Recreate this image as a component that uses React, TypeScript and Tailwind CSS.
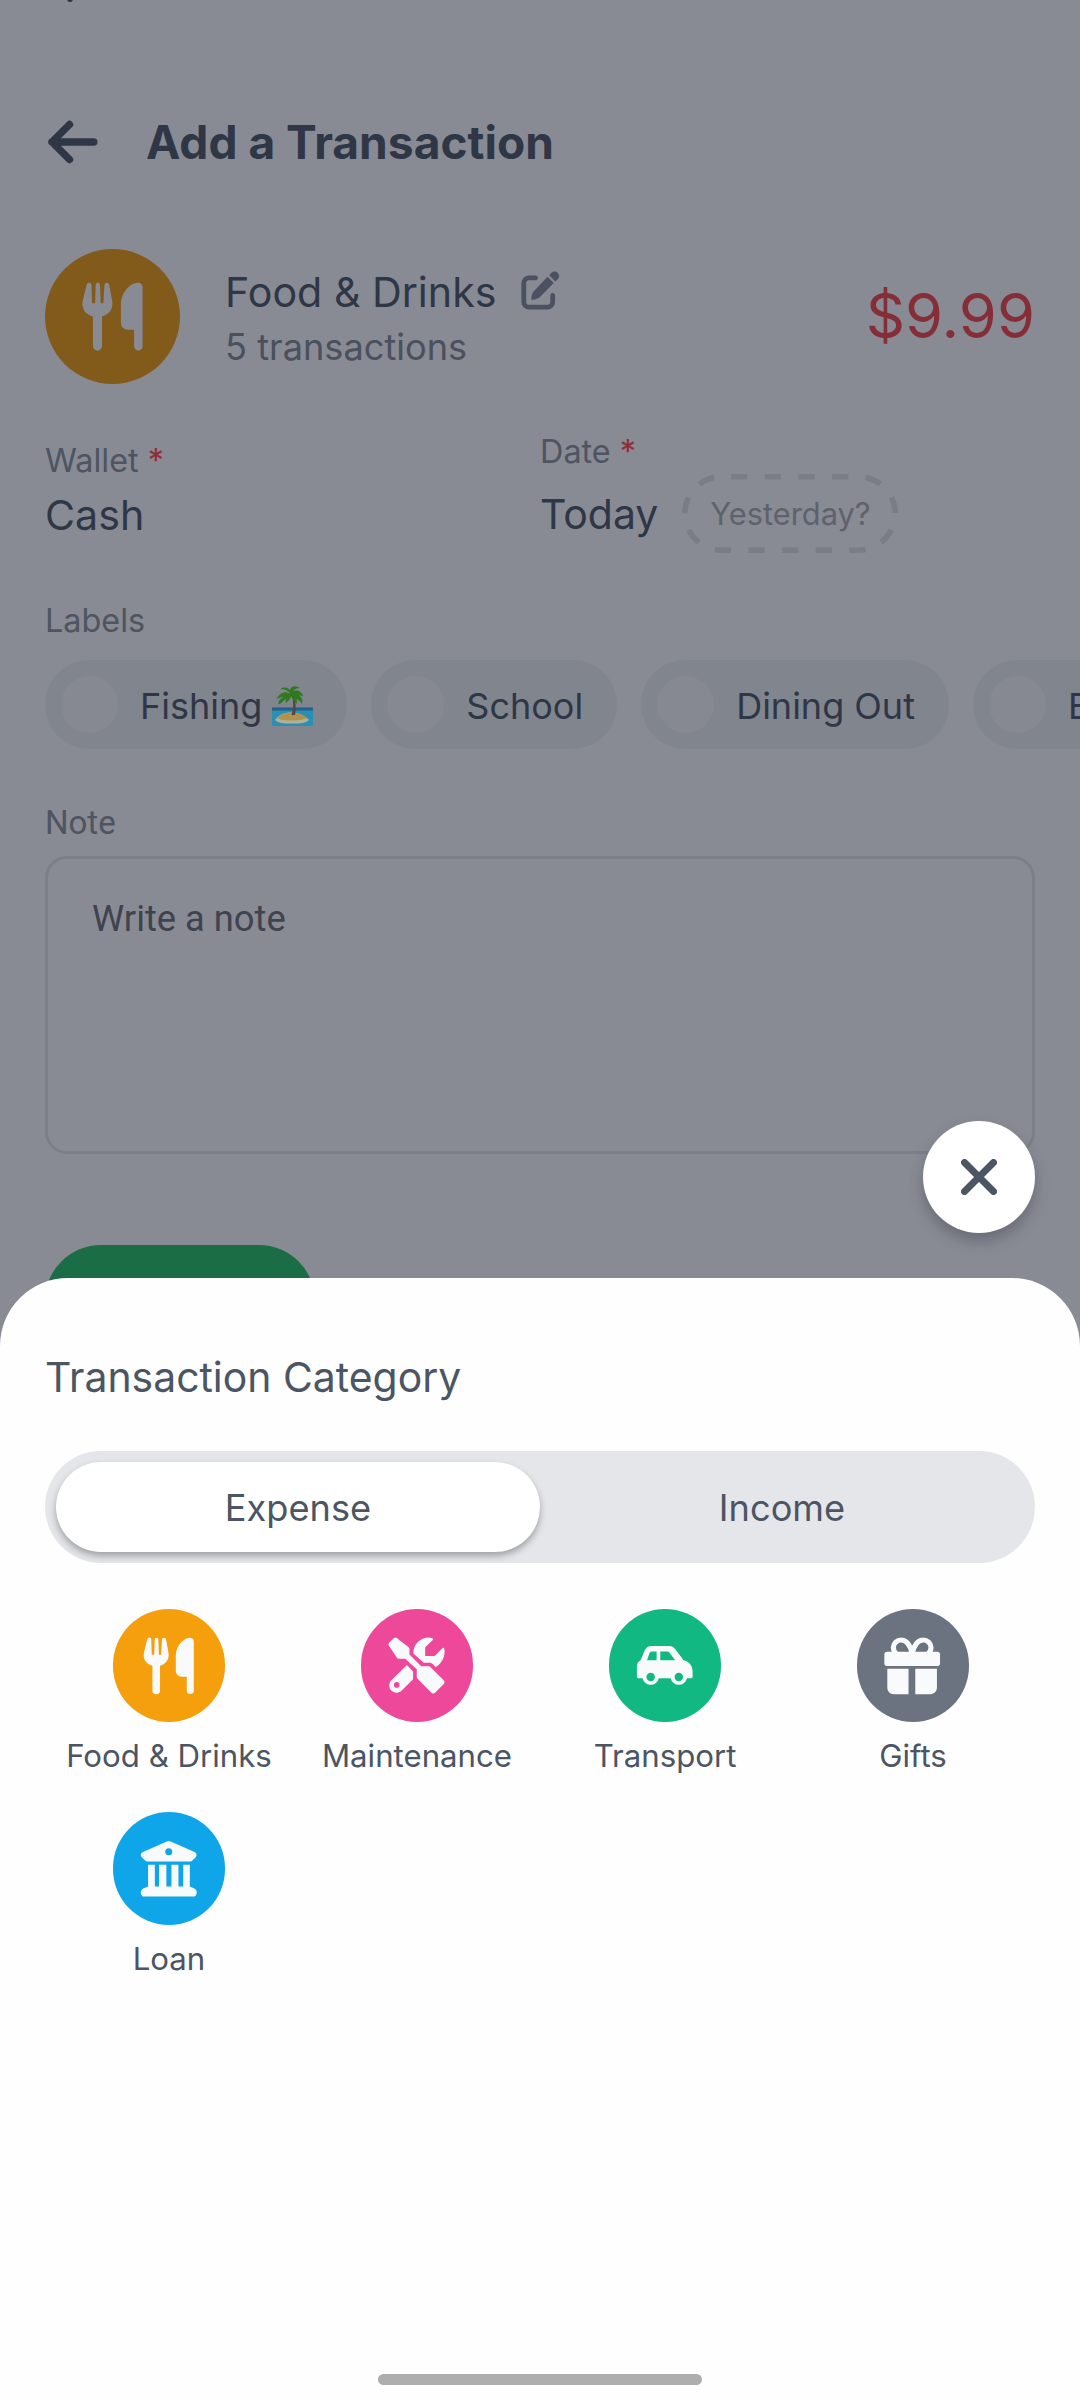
import React, { useState } from "react";

type IconProps = { className?: string };

function FoodIcon({ className }: IconProps) {
  return (
    <svg viewBox="0 0 24 24" className={className} fill="currentColor">
      <path d="M4.35 2.6a.72.72 0 0 1 1.43.08L5.95 8.1h.9L7 2.65a.65.65 0 0 1 1.3 0l.2 5.45h.8l.3-5.42a.72.72 0 0 1 1.42-.1l.85 4.6c.5 2.7-.9 4.1-2.97 4.8v8.8a1.35 1.35 0 0 1-2.7 0v-8.8c-2.2-.7-3.5-2.1-3-4.8z" />
      <path d="M19.5 2c.9 0 1.4.5 1.4 1.3v17.5a1.25 1.25 0 0 1-2.5 0V15.9h-1.9a2 2 0 0 1-2-2V8.5c0-3.4 2.4-6.3 5-6.5z" />
    </svg>
  );
}

function ToolsIcon({ className }: IconProps) {
  return (
    <svg viewBox="0 0 24 24" className={className} fill="currentColor">
      <path d="M2.1 4.9a.9.9 0 0 1 0-1L3.8 2.2a.9.9 0 0 1 1.1-.1l4.1 3.2c.3.2.4.4.4.7v2l4.2 4.2h2.5c.4 0 .6.1.9.4l4.5 4.5c.5.5.5 1 0 1.5l-2.9 2.9c-.5.5-1 .5-1.5 0l-4.8-4.9c-.2-.2-.3-.5-.3-.8v-2.6L7.9 9.5H5.6c-.3 0-.5-.1-.7-.4z" />
      <path
        d="M17.6 2.2c.3.1.3.4.1.6L15 5.4v3.1h3.4l2.7-2.7c.3-.3.6-.2.7.1.5 2.6-.8 5.4-3.1 6.5l-1-1c-.4-.4-.8-.5-1.3-.5h-1.9L10.8 7.6c-.1-3.7 3.5-6.4 6.8-5.4zM8.5 11.7l2.2 2.3v2.8l-4.3 4.3a2.65 2.65 0 0 1-3.7-3.7zm-3.6 6.1a1 1 0 1 0 0 2 1 1 0 0 0 0-2z"
        fillRule="evenodd"
      />
    </svg>
  );
}

function CarIcon({ className }: IconProps) {
  return (
    <svg viewBox="0 0 24 24" className={className} fill="currentColor">
      <path
        fillRule="evenodd"
        d="M4.9 6.5A2.7 2.7 0 0 1 7.4 4.95h6.2c.9 0 1.6.4 2.1 1.1l3 4a3.8 3.8 0 0 1 3.2 3.8v2.1c0 .3-.2.5-.5.5h-1.5a2.97 2.97 0 0 1-5.8 0H9.9a2.97 2.97 0 0 1-5.8 0H2.7c-.4 0-.6-.2-.6-.6v-3.6c0-1.1.4-1.7 1.3-2.2zM7 14.5a1.5 1.5 0 1 0 0 3 1.5 1.5 0 0 0 0-3zm10 0a1.5 1.5 0 1 0 0 3 1.5 1.5 0 0 0 0-3zM6.6 7.5l-.9 2.55h3.4V6.95H7.4a.8.8 0 0 0-.8.55zm3.8-.55v3.1h5.3l-2-2.7a.9.9 0 0 0-.7-.4z"
      />
    </svg>
  );
}

function GiftIcon({ className }: IconProps) {
  return (
    <svg viewBox="0 0 24 24" className={className} fill="currentColor">
      <path
        fill="none"
        stroke="currentColor"
        strokeWidth="1.8"
        d="M11.8 7.6C11 4.4 9.8 2.85 7.9 2.85a2.7 2.7 0 0 0-2.8 2.6c0 1.1.4 1.8 1.1 2.2M11.8 7.6C12.6 4.4 13.8 2.85 15.7 2.85a2.7 2.7 0 0 1 2.8 2.6c0 1.1-.4 1.8-1.1 2.2"
      />
      <rect x="1.9" y="7" width="19.8" height="5.1" rx="1" />
      <path d="M2.95 13.1h7.55v9H5.2a2.2 2.2 0 0 1-2.25-2.2zM12.9 13.1h7.7v6.8a2.2 2.2 0 0 1-2.2 2.2h-5.5z" />
    </svg>
  );
}

function BankIcon({ className }: IconProps) {
  return (
    <svg viewBox="0 0 24 24" className={className} fill="currentColor">
      <path
        fillRule="evenodd"
        d="M11.3 2.3a1.7 1.7 0 0 1 1.4 0l8.5 3.7c.8.4.9 1.2.3 2l-1.1 1.1a1.2 1.2 0 0 1-.8.35H4.4a1.2 1.2 0 0 1-.8-.35L2.5 8c-.7-.7-.6-1.6.3-2zM12 4.7a1.25 1.25 0 1 0 0 2.5 1.25 1.25 0 0 0 0-2.5z"
      />
      <path d="M4.65 10.6h2.4v7.7h1.5v-7.7h2.6v7.7h1.8v-7.7h2.5v7.7h1.7v-7.7h2.35v7.7l1.6.7c.6.3.85.8.85 1.5 0 .8-.5 1.4-1.3 1.4H3.35c-.8 0-1.3-.6-1.3-1.4 0-.7.3-1.2.9-1.5l1.7-.7z" />
    </svg>
  );
}

function EditIcon({ className }: IconProps) {
  return (
    <svg viewBox="0 0 39 39" className={className} fill="currentColor">
      <path
        d="M14.5 6.9H8A5.2 5.2 0 0 0 2.8 12.1V31A5.2 5.2 0 0 0 8 36.2H26.5A5.2 5.2 0 0 0 31.7 31V24.5"
        fill="none"
        stroke="currentColor"
        strokeWidth="4.8"
        strokeLinecap="round"
      />
      <path d="M26.5 5.8l6.2 6.2-13.5 13.7c-1.8 1.8-4.3 2.6-7.9 3.1-.8.1-1.2-.4-1.1-1.1.5-3.5 1.3-6 3.1-7.9zM28.2 4.2l2-2.1c2.2-2.2 4.9-1.7 6.5-.2 1.8 1.7 2 4.3-.1 6.4l-2.2 2.1z" />
    </svg>
  );
}

function IslandIcon({ className }: IconProps) {
  return (
    <svg viewBox="0 0 41 40" className={className}>
      <rect y="21.5" width="41" height="18.5" fill="#2b8fb3" />
      <rect y="21.5" width="41" height="3" fill="#24628c" />
      <path
        d="M3 34c4-5 8-7.5 16-7.5s14 3 18 7.5c-3 3-8 3.5-17 3.5S6 37 3 34z"
        fill="#a9b3a4"
      />
      <path
        d="M5.5 32c3-3.5 8-5.2 14-5.2S32 29 34.5 32c-4 2.2-8 2.5-15 2.5S9 34 5.5 32z"
        fill="#b3914a"
      />
      <path d="M19 8c2.5 6 3.2 13 .5 21H23c1.5-8 .5-15-2-21z" fill="#5b4340" />
      <path
        d="M18.5 8C14 4.5 8 6 4.5 13c3-1.500 5-2 6.500-1.500C8 12.500 6 15 6.500 18.500c4-1.500 5-4.500 8-6C13.500 14 13.500 15.500 14 17c2.500-2 4-4 5-6.500 2 2 2.500 4.500 5.500 7.500.8-2.200.7-3.500 0-5 2.500 1 4 2.500 5.500 5 1.200-4.500-.8-7.500-3.500-8.500 1.800-.3 3.200 0 5 1C29.500 5.500 25 3 21 5.500 22.500 3 25 2 28 2 22.500-1.500 18 1 18 4.500 16.500 1.500 12 .5 8.500 3c4.500 0 8 1.500 10 5z"
        fill="#2f7a1f"
      />
    </svg>
  );
}

const labels = [
  { name: "Fishing", Icon: IslandIcon },
  { name: "School" },
  { name: "Dining Out" },
  { name: "Electronics" },
];

const categories = [
  { name: "Food & Drinks", color: "bg-[#f49f0b]", Icon: FoodIcon },
  { name: "Maintenance", color: "bg-[#ed4899]", Icon: ToolsIcon },
  { name: "Transport", color: "bg-[#12b881]", Icon: CarIcon },
  { name: "Gifts", color: "bg-[#6b7280]", Icon: GiftIcon },
  { name: "Loan", color: "bg-[#0ea5e9]", Icon: BankIcon },
];

function TransactionForm() {
  return (
    <div className="flex flex-col px-[45px] pt-[112px] text-[#2f3646]">
      <div className="flex h-[60px] items-center">
        <svg
          viewBox="0 0 54 50"
          className="h-[50px] w-[54px]"
          fill="none"
          stroke="currentColor"
          strokeWidth="7.4"
          strokeLinecap="round"
          strokeLinejoin="round"
        >
          <path d="M24.5 7.5L7 25l17.5 17.5M7 25h41.8" />
        </svg>
        <h1 className="ml-[47px] pt-[2px] text-[46.1px] font-bold">
          Add a Transaction
        </h1>
      </div>

      <div className="mt-[77px] flex h-[135px] items-center">
        <div className="flex size-[135px] items-center justify-center rounded-full bg-[#825b1b]">
          <FoodIcon className="size-[81px] text-[#888b94]" />
        </div>
        <div className="ml-[45px] pt-[6px]">
          <div className="flex h-[54px] items-center text-[41.2px]">
            Food &amp; Drinks
            <EditIcon className="mb-[5px] ml-[24px] size-[39px] text-[#4b5160]" />
          </div>
          <p className="text-[36.2px] leading-[54px] text-[#4b505d]">
            5 transactions
          </p>
        </div>
        <p className="ml-auto text-[61.4px] text-[#862e38]">$9.99</p>
      </div>

      <div className="mt-[46px] grid h-[123px] grid-cols-2">
        <div className="pt-[10px]">
          <p className="text-[32.4px] leading-[42px] text-[#4f5461]">
            Wallet <span className="text-[#932c35]">*</span>
          </p>
          <p className="text-[41.2px] leading-[66px]">Cash</p>
        </div>
        <div>
          <p className="pt-[1px] text-[32.4px] leading-[42px] text-[#4f5461]">
            Date <span className="text-[#932c35]">*</span>
          </p>
          <div className="mt-[1px] flex h-[79px] items-center">
            <span className="pt-[3px] text-[41px]">Today</span>
            <div className="relative ml-[24px] flex h-[79px] w-[216px] items-center justify-center">
              <svg
                viewBox="0 0 216 79"
                className="absolute inset-0"
                fill="none"
              >
                <rect
                  x="2.8"
                  y="2.8"
                  width="210.4"
                  height="73.4"
                  rx="36.7"
                  stroke="#797d86"
                  strokeWidth="5.6"
                  strokeDasharray="16.2 17.44"
                  strokeDashoffset="-9.6"
                />
              </svg>
              <span className="pt-[1px] text-[30.8px] text-[#5e626d]">
                Yesterday?
              </span>
            </div>
          </div>
        </div>
      </div>

      <p className="mt-[47px] text-[32.4px] leading-[42px] text-[#4f5461]">
        Labels
      </p>
      <div className="mt-[18px] flex gap-[24px]">
        {labels.map(({ name, Icon }) => (
          <div
            key={name}
            className="flex h-[89px] shrink-0 items-center rounded-full bg-[#81858e] pr-[34px] pl-[16px] text-[36px]"
          >
            <div className="mr-[22px] size-[57px] rounded-full bg-[#868992]"></div>
            <span className="pt-[2px]">{name}</span>
            {Icon && <Icon className="mt-[3px] ml-[10px] h-[40px] w-[41px]" />}
          </div>
        ))}
      </div>

      <p className="mt-[53px] font-['Roboto',sans-serif] text-[33px] leading-[42px] text-[#4f5461]">
        Note
      </p>
      <div className="mt-[12px] h-[298px] rounded-[22px] border-[3px] border-[#7b7f88] px-[44px] pt-[39px] font-['Roboto',sans-serif] text-[36.3px] leading-[42px] text-[#3f434d]">
        Write a note
      </div>

      <div className="mt-[91px] h-[112px] w-[270px] rounded-full bg-[#1a6d45]"></div>
    </div>
  );
}

function CategorySheet() {
  const [tab, setTab] = useState("Expense");

  return (
    <div className="absolute inset-x-0 top-[1278px] bottom-0 rounded-t-[68px] bg-[#fefefe] px-[45px] pt-[72px] text-[#4b5563]">
      <h2 className="text-[40.9px] leading-[54px]">Transaction Category</h2>

      <div className="mt-[47px] flex h-[112px] rounded-full bg-[#e5e6ea] p-[11px]">
        {["Expense", "Income"].map((name) => (
          <button
            key={name}
            onClick={() => setTab(name)}
            className={
              tab === name
                ? "flex-1 rounded-full bg-white pt-[2px] text-[36.2px] shadow-[0_4px_7px_rgba(0,0,0,0.3)]"
                : "flex-1 rounded-full pt-[2px] text-[36.2px]"
            }
          >
            {name}
          </button>
        ))}
      </div>

      <div className="-mr-[2px] mt-[46px] grid grid-cols-4 gap-y-[36px]">
        {categories.map(({ name, color, Icon }) => (
          <div key={name} className="flex flex-col items-center">
            <div
              className={`flex size-[112.5px] items-center justify-center rounded-full ${color}`}
            >
              <Icon className="size-[67.5px] text-[#f9fafb]" />
            </div>
            <p className="mt-[14.5px] text-[31.2px] leading-[40px] whitespace-nowrap">
              {name}
            </p>
          </div>
        ))}
      </div>
    </div>
  );
}

export default function App() {
  return (
    <div className="relative h-[2400px] w-[1080px] overflow-hidden bg-[#888b94] font-['Inter',sans-serif]">
      <div className="absolute -top-[4px] left-[67px] h-[6px] w-[6px] rounded-full bg-[#2c3445]"></div>
      <TransactionForm />
      <button className="absolute top-[1121px] left-[923px] flex size-[112px] items-center justify-center rounded-full bg-white text-[#4b5563] shadow-[0_8px_14px_rgba(60,62,75,0.4)]">
        <svg
          viewBox="0 0 36 36"
          className="size-[36px]"
          stroke="currentColor"
          strokeWidth="7"
          strokeLinecap="round"
        >
          <path d="M3.5 3.5l29 29M32.5 3.5l-29 29" />
        </svg>
      </button>
      <CategorySheet />
      <div className="absolute top-[2374px] left-[378px] h-[11px] w-[324px] rounded-full bg-[#aeaeae]"></div>
    </div>
  );
}
